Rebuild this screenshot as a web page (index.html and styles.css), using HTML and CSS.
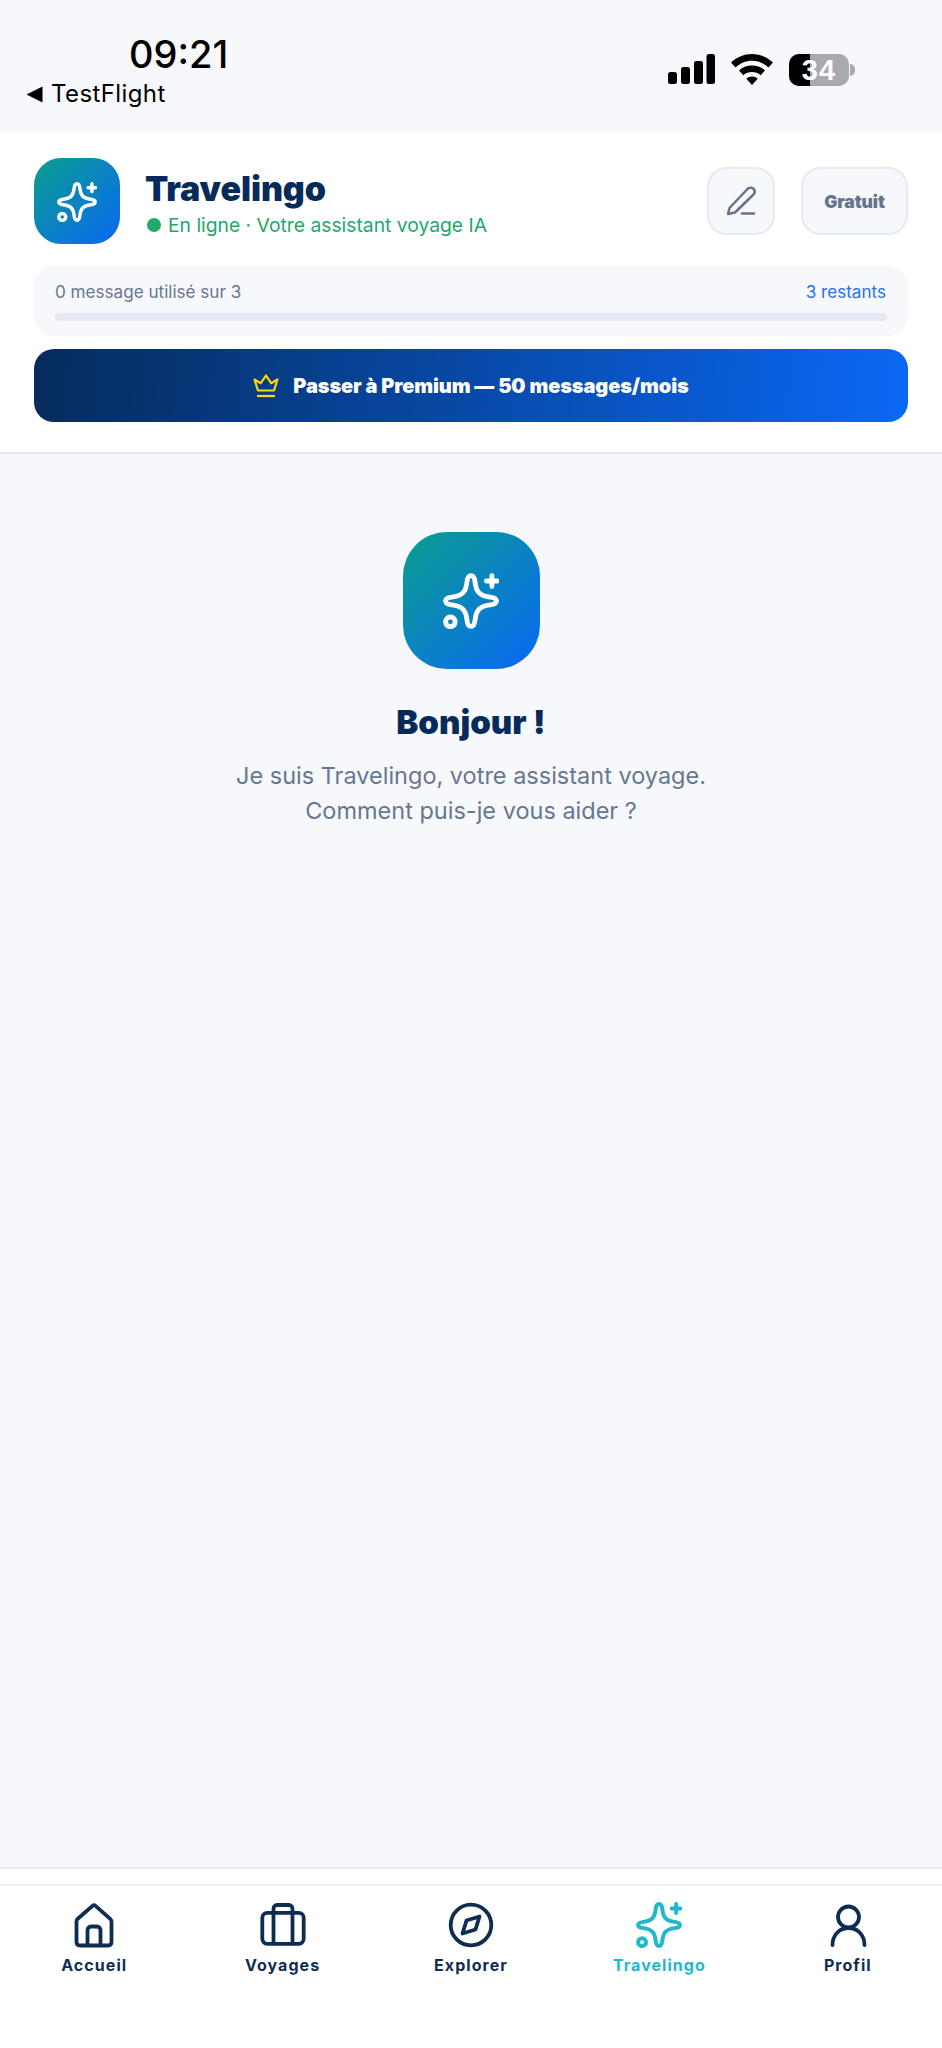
FILE: index.html
```html
<!DOCTYPE html>
<html lang="fr">
<head>
<meta charset="utf-8">
<title>Travelingo</title>
<link rel="stylesheet" href="styles.css">
</head>
<body>
<svg class="defs" width="0" height="0" aria-hidden="true">
  <symbol id="sparks" viewBox="0 0 44 44">
    <path fill="none" stroke="currentColor" stroke-width="3.8" stroke-linejoin="round" d="M22 2C24 2 24.800 3.500 25.200 7C26 15 29 18 37 19C41 19.500 42 20.500 42 22C42 23.500 41 24.500 37 25C29 26 26 29 25.200 37C24.800 40.500 24 42 22 42C20 42 19.200 40.500 18.800 37C18 29 15 26 7 25C3 24.500 2 23.500 2 22C2 20.500 3 19.500 7 19C15 18 18 15 18.800 7C19.200 3.500 20 2 22 2Z"/>
    <path fill="none" stroke="currentColor" stroke-width="3.8" stroke-linecap="round" d="M38.400 2V10.600M34.100 6.300H42.700"/>
    <circle cx="5.800" cy="38.400" r="3.800" fill="none" stroke="currentColor" stroke-width="3.800"/>
  </symbol>
</svg>

<header class="status">
  <div class="status-left">
    <div class="time">09:21</div>
    <div class="back"><svg class="back-arrow" viewBox="0 0 16 16"><path d="M15.500 .5V15.500L.5 8Z"/></svg>TestFlight</div>
  </div>
  <div class="status-right">
    <svg class="signal" viewBox="0 0 47 30"><rect x="0" y="18" width="9" height="12" rx="2.500"/><rect x="13" y="13" width="9" height="17" rx="2.500"/><rect x="26" y="7" width="9" height="23" rx="2.500"/><rect x="38.500" y="0" width="8.500" height="30" rx="2.500"/></svg>
    <svg class="wifi" viewBox="0 0 42 31"><path d="M21 0C29 0 36 3 42 8.500L37.500 13.500C33 9.300 27.500 6.800 21 6.800C14.500 6.800 9 9.300 4.500 13.500L0 8.500C6 3 13 0 21 0Z"/><path d="M21 11.500C26 11.500 30.500 13.300 34 16.500L29.700 21.200C27.300 19 24.300 17.900 21 17.900C17.700 17.900 14.700 19 12.300 21.200L8 16.500C11.500 13.300 16 11.500 21 11.500Z"/><path d="M21 22.500C23.200 22.500 25 23.200 26.700 24.700L21 31L15.300 24.700C17 23.200 18.800 22.500 21 22.500Z"/></svg>
    <div class="battery"><div class="battery-body"><div class="battery-fill"></div><span class="battery-num">34</span></div><div class="battery-nub"></div></div>
  </div>
</header>

<section class="top">
  <div class="head-row">
    <div class="logo"><svg class="logo-icon"><use href="#sparks"/></svg></div>
    <div class="head-text">
      <h1 class="title">Travelingo</h1>
      <div class="online"><span class="dot"></span>En ligne · Votre assistant voyage IA</div>
    </div>
    <button class="square-btn" type="button" aria-label="Nouveau">
      <svg class="pencil" viewBox="0 0 30 30"><path fill="none" stroke="currentColor" stroke-width="2.500" stroke-linejoin="round" d="M2 28L3.500 22L21.500 3C23 1.500 25.500 1 27.500 2.800C29.200 4.600 29 6.800 27.500 8.500L9 26.500Z"/><path fill="none" stroke="currentColor" stroke-width="2.500" stroke-linecap="round" d="M16 27.500H28"/></svg>
    </button>
    <button class="plan-btn" type="button">Gratuit</button>
  </div>

  <div class="usage">
    <div class="usage-row"><span>0 message utilisé sur 3</span><span class="left-count">3 restants</span></div>
    <div class="track"></div>
  </div>

  <button class="premium" type="button">
    <svg class="crown" viewBox="0 0 26 24"><path fill="none" stroke="currentColor" stroke-width="2.200" stroke-linejoin="round" d="M5 16.500L1.500 5.500L7.800 9.200L13 1.500L18.200 9.200L24.500 5.500L21 16.500Z"/><path fill="none" stroke="currentColor" stroke-width="2.200" d="M4 22H22"/></svg>
    Passer à Premium — 50 messages/mois
  </button>
</section>

<main class="chat">
  <div class="hero-logo"><svg class="hero-icon"><use href="#sparks"/></svg></div>
  <h2 class="hello">Bonjour !</h2>
  <p class="intro">Je suis Travelingo, votre assistant voyage.<br>Comment puis-je vous aider ?</p>
</main>

<nav class="tabs">
  <a class="tab">
    <svg class="tab-icon" viewBox="0 0 48 48"><path d="M6.500 20.500C6.500 19.500 7 18.500 7.800 17.800L22.500 4.800C23.400 4 24.600 4 25.500 4.800L40.200 17.800C41 18.500 41.500 19.500 41.500 20.500V41C41.500 43 40.500 44.500 38 44.500H10C7.500 44.500 6.500 43 6.500 41Z"/><path d="M17.500 44.500V29.500C17.500 27 19 25.500 21 25.500H27C29 25.500 30.500 27 30.500 29.500V44.500"/></svg>
    <span>Accueil</span>
  </a>
  <a class="tab">
    <svg class="tab-icon" viewBox="0 0 48 48"><rect x="3.300" y="11.800" width="41.400" height="31" rx="5"/><path d="M14.500 42.800V7.500C14.500 5.500 16 4 18 4H30C32 4 33.500 5.500 33.500 7.500V42.800"/></svg>
    <span>Voyages</span>
  </a>
  <a class="tab">
    <svg class="tab-icon" viewBox="0 0 48 48"><circle cx="24" cy="24" r="20.300"/><path stroke-linejoin="round" d="M32.500 15.500L28.500 28.500L15.500 32.500L19.500 19.500Z"/></svg>
    <span>Explorer</span>
  </a>
  <a class="tab active">
    <svg class="tab-spark"><use href="#sparks"/></svg>
    <span>Travelingo</span>
  </a>
  <a class="tab">
    <svg class="tab-icon" viewBox="0 0 48 48"><circle cx="24.500" cy="16" r="10.500"/><path stroke-linecap="round" d="M8.500 44C8.500 34 15.500 27 24.500 27C33.500 27 40.500 34 40.500 44"/></svg>
    <span>Profil</span>
  </a>
</nav>
</body>
</html>
```
FILE: styles.css
```css
* { box-sizing: border-box; }
html, body { margin: 0; padding: 0; }
body {
  width: 942px;
  height: 2048px;
  display: flex;
  flex-direction: column;
  background: #f7f8fc;
  font-family: "Inter", "Liberation Sans", sans-serif;
  overflow: hidden;
}
.defs { position: absolute; }
h1, h2, p { margin: 0; }

.status {
  height: 133px;
  flex: none;
  display: flex;
  justify-content: space-between;
  align-items: flex-start;
  padding: 32px 87px 0 26px;
  color: #000;
}
.status-left { display: flex; flex-direction: column; }
.time {
  font-size: 38px;
  line-height: 44px;
  font-weight: 500;
  margin-left: 103px;
}
.back {
  display: flex;
  align-items: center;
  gap: 8px;
  font-size: 24px;
  line-height: 28px;
  font-weight: 400;
  letter-spacing: 0.4px;
  margin-top: 4px;
}
.back-arrow { width: 17px; height: 17px; fill: #000; }
.status-right { display: flex; align-items: flex-start; padding-top: 22px; }
.signal { width: 47px; height: 30px; fill: #000; }
.wifi { width: 42px; height: 31px; fill: #000; margin-left: 16px; }
.battery { display: flex; align-items: center; margin-left: 16px; }
.battery-body {
  position: relative;
  width: 60px;
  height: 32px;
  border-radius: 10px;
  background: #a9aaae;
  overflow: hidden;
  display: flex;
  align-items: center;
  justify-content: center;
}
.battery-fill { position: absolute; left: 0; top: 0; bottom: 0; width: 21px; background: #000; }
.battery-num {
  position: relative;
  color: #fff;
  font-family: "Liberation Sans", sans-serif;
  font-size: 29px;
  font-weight: 700;
  letter-spacing: 1px;
  line-height: 32px;
}
.battery-nub { width: 5px; height: 12px; margin-left: 1px; border-radius: 0 6px 6px 0; background: #a9aaae; }

.top {
  flex: none;
  height: 321px;
  background: #fff;
  border-bottom: 2px solid #e6e9f2;
  padding: 25px 34px 0;
  display: flex;
  flex-direction: column;
}
.head-row { display: flex; align-items: center; height: 86px; }
.logo {
  width: 86px;
  height: 86px;
  flex: none;
  border-radius: 27px;
  background: linear-gradient(135deg, #0a9e8e, #0a68f5);
  display: flex;
  align-items: center;
  justify-content: center;
  color: #fff;
  padding-top: 2px;
}
.logo-icon { width: 40px; height: 40px; }
.head-text { flex: 1; margin-left: 25px; padding-top: 4px; display: flex; flex-direction: column; }
.title {
  font-size: 34px;
  line-height: 40px;
  font-weight: 900;
  color: #062b5b;
  letter-spacing: -0.1px;
}
.online {
  display: flex;
  align-items: center;
  font-size: 19.300px;
  line-height: 26px;
  color: #22a86b;
  margin-top: 3px;
}
.dot { width: 14px; height: 14px; border-radius: 50%; background: #22a86b; margin: 0 7px 0 2px; }
.square-btn, .plan-btn {
  height: 68px;
  border: 2px solid #e6e9f2;
  border-radius: 20px;
  background: #f7f8fc;
  color: #64748b;
  padding: 0;
  display: flex;
  align-items: center;
  justify-content: center;
  flex: none;
}
.square-btn { width: 68px; }
.pencil { width: 30px; height: 30px; }
.plan-btn {
  width: 107px;
  margin-left: 26px;
  font-family: "Inter", sans-serif;
  font-size: 17.500px;
  font-weight: 900;
  letter-spacing: -0.1px;
}

.usage {
  margin-top: 22px;
  height: 70px;
  border-radius: 20px;
  background: #f7f8fc;
  padding: 16px 21px 0;
}
.usage-row {
  display: flex;
  justify-content: space-between;
  font-size: 17.100px;
  line-height: 20px;
  color: #667790;
}
.left-count { color: #1f72ee; margin-right: 1px; }
.track { margin-top: 11px; height: 8px; border-radius: 4px; background: #e6e9f2; }

.premium {
  margin-top: 13px;
  height: 73px;
  border: 0;
  border-radius: 20px;
  background: linear-gradient(95deg, #062b5b, #0a68f5);
  color: #fff;
  display: flex;
  align-items: center;
  justify-content: center;
  gap: 14px;
  font-family: "Inter", sans-serif;
  font-size: 20px;
  font-weight: 900;
  letter-spacing: -0.1px;
}
.crown { width: 26px; height: 24px; color: #ffd60a; }

.chat {
  flex: 1;
  display: flex;
  flex-direction: column;
  align-items: center;
  padding-top: 78px;
  border-bottom: 2px solid #e6e9f2;
}
.hero-logo {
  width: 137px;
  height: 137px;
  border-radius: 44px;
  background: linear-gradient(135deg, #0a9e8e, #0a68f5);
  display: flex;
  align-items: center;
  justify-content: center;
  color: #fff;
}
.hero-icon { width: 56px; height: 56px; }
.hello {
  margin-top: 31px;
  font-size: 33px;
  line-height: 44px;
  font-weight: 900;
  color: #062b5b;
}
.intro {
  margin-top: 14px;
  font-size: 23.500px;
  line-height: 35px;
  color: #667790;
  text-align: center;
}

.tabs {
  flex: none;
  height: 179px;
  background: #fff;
  padding-top: 16px;
  display: grid;
  grid-template-columns: repeat(5, 1fr);
  background-image: linear-gradient(#eceef2, #eceef2);
  background-repeat: no-repeat;
  background-size: 100% 2px;
  background-position: 0 15px;
}
.tab {
  display: flex;
  flex-direction: column;
  align-items: center;
  padding-top: 16px;
  color: #0f2d4f;
  font-size: 16px;
  line-height: 22px;
  font-weight: 700;
  letter-spacing: 1.050px;
}
.tab span { margin-top: 5px; }
.tab-icon {
  width: 48px;
  height: 48px;
  fill: none;
  stroke: currentColor;
  stroke-width: 3.800;
}
.tab-spark { width: 46px; height: 46px; margin: 1px 0; color: #22b8cc; }
.tab.active { color: #22b8cc; }
```
